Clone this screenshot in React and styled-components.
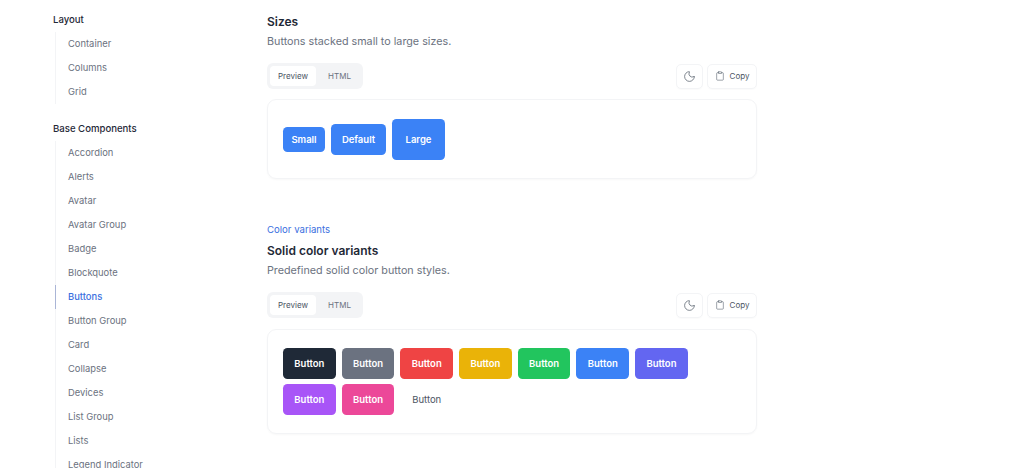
import styled, { createGlobalStyle } from 'styled-components';
import { Moon, Clipboard } from 'lucide-react';

const GlobalStyle = createGlobalStyle`
  html, body {
    margin: 0;
    height: 468px;
    overflow: hidden;
    background: #fff;
    font-family: 'Inter', 'Liberation Sans', sans-serif;
  }
`;

const Page = styled.div`
  display: flex;
  width: 1024px;
  height: 468px;
  overflow: hidden;
`;

const Sidebar = styled.nav`
  width: 267px;
  flex-shrink: 0;
  padding: 12px 0 0 53px;
  box-sizing: border-box;
`;

const GroupTitle = styled.div`
  font-size: 9.6px;
  line-height: 16px;
  font-weight: 500;
  color: #1f2937;
`;

const NavList = styled.ul`
  list-style: none;
  margin: 4px 0 17px 2px;
  padding: 0;
  border-left: 1px solid #f3f4f6;
`;

const NavItem = styled.li`
  height: 24px;
  line-height: 23px;
  margin-left: -1px;
  padding-left: 12px;
  font-size: 9.4px;
  color: ${(p) => (p.$active ? '#3b6fe0' : '#6b7280')};
  font-weight: ${(p) => (p.$active ? 500 : 400)};
  border-left: 1px solid ${(p) => (p.$active ? '#aab5d6' : 'transparent')};
`;

const Main = styled.main`
  width: 490px;
  padding-top: 14px;
`;

const Section = styled.section`
  margin-bottom: 43px;
`;

const Eyebrow = styled.div`
  font-size: 9.6px;
  line-height: 16px;
  color: #3b6fe0;
  margin-bottom: 5px;
`;

const Title = styled.h2`
  margin: 0;
  font-size: 12px;
  line-height: 16px;
  font-weight: 600;
  color: #1f2937;
`;

const Description = styled.p`
  margin: 4px 0 0;
  font-size: 10.75px;
  line-height: 16px;
  color: #6b7280;
`;

const Toolbar = styled.div`
  display: flex;
  align-items: center;
  justify-content: space-between;
  margin-top: 13px;
`;

const Tabs = styled.div`
  display: flex;
  gap: 3px;
  padding: 3px;
  width: 96px;
  height: 26px;
  box-sizing: border-box;
  background: #f3f4f6;
  border-radius: 6px;
`;

const Tab = styled.div`
  flex: ${(p) => (p.$active ? '0 0 46px' : '1')};
  display: flex;
  align-items: center;
  justify-content: center;
  font-size: 8px;
  font-weight: 400;
  color: ${(p) => (p.$active ? '#4b5563' : '#6b7280')};
  background: ${(p) => (p.$active ? '#fff' : 'transparent')};
  border-radius: 4px;
`;

const Actions = styled.div`
  display: flex;
  gap: 4px;
`;

const IconButton = styled.div`
  display: flex;
  align-items: center;
  justify-content: center;
  gap: 5px;
  height: 25px;
  width: ${(p) => p.$width}px;
  box-sizing: border-box;
  border: 1px solid #f3f4f6;
  border-radius: 5px;
  box-shadow: 0 1px 1px rgba(0, 0, 0, 0.02);
  font-size: 8px;
  font-weight: 400;
  color: #4b5563;
`;

const Card = styled.div`
  display: flex;
  flex-wrap: ${(p) => (p.$wrap ? 'wrap' : 'nowrap')};
  align-items: center;
  align-content: flex-start;
  gap: 5px 6px;
  margin-top: ${(p) => p.$top}px;
  min-height: ${(p) => p.$height}px;
  padding: ${(p) => p.$pad}px 15px;
  box-sizing: border-box;
  border: 1px solid #f3f4f6;
  border-radius: 9px;
  box-shadow: 0 1px 2px rgba(0, 0, 0, 0.03);
`;

const sizes = {
  sm: 'width: 42px; height: 25px;',
  md: 'width: 55px; height: 31px;',
  lg: 'width: 53px; height: 41px;',
};

const Button = styled.div`
  display: flex;
  align-items: center;
  justify-content: center;
  box-sizing: border-box;
  border-radius: 4.5px;
  font-size: 9.5px;
  font-weight: ${(p) => (p.$plain ? 400 : 600)};
  color: ${(p) => (p.$plain ? '#4b5563' : '#fff')};
  background: ${(p) => p.$color || 'transparent'};
  ${(p) => sizes[p.$size] || 'width: 52.7px; height: 31px;'}
`;

const layoutItems = ['Container', 'Columns', 'Grid'];
const baseItems = [
  'Accordion',
  'Alerts',
  'Avatar',
  'Avatar Group',
  'Badge',
  'Blockquote',
  'Buttons',
  'Button Group',
  'Card',
  'Collapse',
  'Devices',
  'List Group',
  'Lists',
  'Legend Indicator',
];
const variantColors = [
  '#1f2937',
  '#6b7280',
  '#ef4444',
  '#eab308',
  '#22c55e',
  '#3b82f6',
  '#6366f1',
  '#a855f7',
  '#ec4899',
];

const PreviewBar = () => (
  <Toolbar>
    <Tabs>
      <Tab $active>Preview</Tab>
      <Tab>HTML</Tab>
    </Tabs>
    <Actions>
      <IconButton $width={27}>
        <Moon size={13} strokeWidth={1.3} color="#4b5563" />
      </IconButton>
      <IconButton $width={50}>
        <Clipboard size={10} strokeWidth={1.3} color="#4b5563" />
        Copy
      </IconButton>
    </Actions>
  </Toolbar>
);

const App = () => {
  return (
    <Page>
      <GlobalStyle />
      <Sidebar>
        <GroupTitle>Layout</GroupTitle>
        <NavList>
          {layoutItems.map((item) => (
            <NavItem key={item}>{item}</NavItem>
          ))}
        </NavList>
        <GroupTitle>Base Components</GroupTitle>
        <NavList>
          {baseItems.map((item) => (
            <NavItem key={item} $active={item === 'Buttons'}>
              {item}
            </NavItem>
          ))}
        </NavList>
      </Sidebar>
      <Main>
        <Section>
          <Title>Sizes</Title>
          <Description>Buttons stacked small to large sizes.</Description>
          <PreviewBar />
          <Card $top={10} $height={80} $pad={0}>
            <Button $size="sm" $color="#3b82f6">Small</Button>
            <Button $size="md" $color="#3b82f6">Default</Button>
            <Button $size="lg" $color="#3b82f6">Large</Button>
          </Card>
        </Section>
        <Section>
          <Eyebrow>Color variants</Eyebrow>
          <Title>Solid color variants</Title>
          <Description>Predefined solid color button styles.</Description>
          <PreviewBar />
          <Card $wrap $top={11} $height={104} $pad={18}>
            {variantColors.map((color) => (
              <Button key={color} $color={color}>Button</Button>
            ))}
            <Button $plain>Button</Button>
          </Card>
        </Section>
      </Main>
    </Page>
  );
};

export default App;
